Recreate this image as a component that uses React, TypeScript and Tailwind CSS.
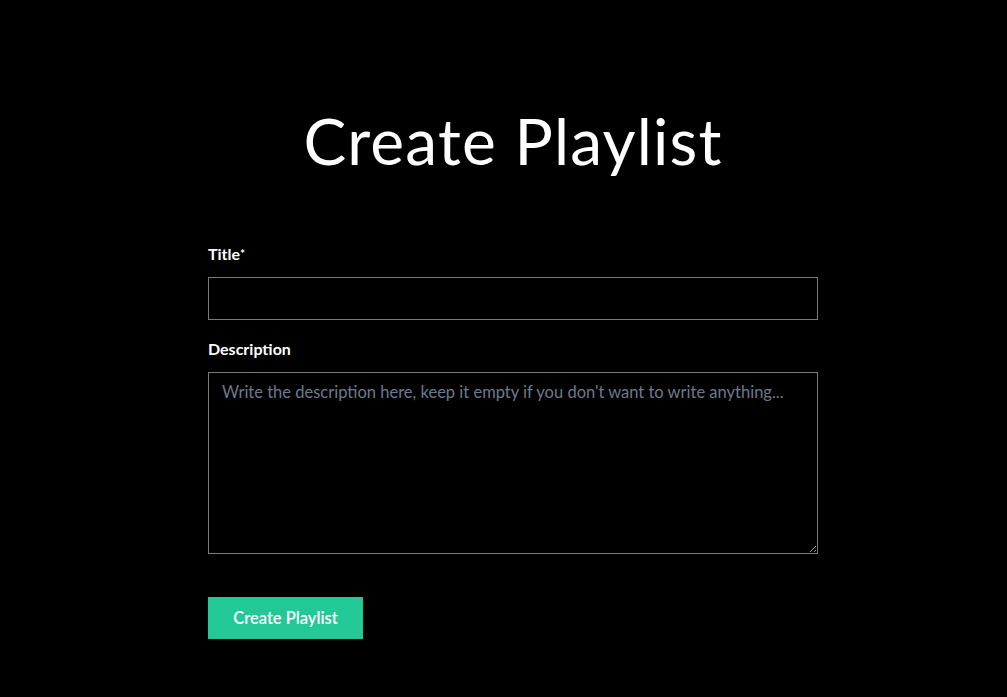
import React, { useState } from 'react'

export default function App() {
  const [title, setTitle] = useState('')
  const [description, setDescription] = useState('')

  return (
    <div className="min-h-[697px] w-full bg-black text-white font-['Lato',sans-serif] flex justify-center pl-[19px]">
      <div className="w-[610px] pt-[101px]">
        <h1 className="text-center text-[64px] leading-[80px] font-normal tracking-[1.2px]">Create Playlist</h1>

        <form className="mt-[63px]" onSubmit={e => e.preventDefault()}>
          <label className="block text-[16px] font-bold leading-[20px]">
            Title<span className="text-[12px] align-top">*</span>
          </label>
          <input
            className="mt-[13px] block w-full h-[43px] px-3 bg-black border border-[#7a7a7a] text-white outline-none"
            value={title}
            onChange={e => setTitle(e.target.value)}
          />

          <label className="block mt-[19px] text-[16px] font-bold leading-[20px]">Description</label>
          <textarea
            className="mt-[13px] block w-full h-[182px] px-[13px] py-[7px] bg-black border border-[#7a7a7a] text-[16.5px] text-white placeholder:text-[#6b7b8c] outline-none"
            placeholder="Write the description here, keep it empty if you don't want to write anything..."
            value={description}
            onChange={e => setDescription(e.target.value)}
          />

          <button
            type="submit"
            className="mt-[43px] w-[155px] h-[42px] bg-[#22c997] text-white text-[16.5px] font-semibold"
          >
            Create Playlist
          </button>
        </form>
      </div>
    </div>
  )
}
